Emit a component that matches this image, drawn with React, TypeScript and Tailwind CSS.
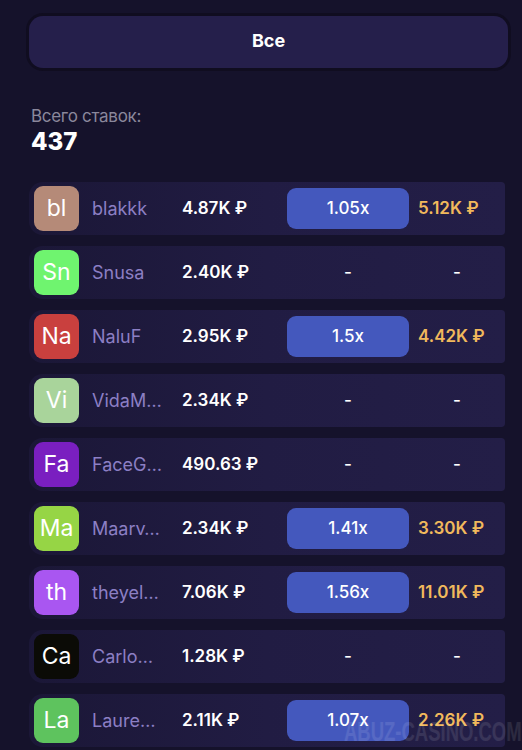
import React from "react";

interface Bet {
  initials: string;
  color: string;
  name: string;
  amount: string;
  coef?: string;
  win?: string;
}

const bets: Bet[] = [
  { initials: "bl", color: "bg-[#b58a78]", name: "blakkk", amount: "4.87K ₽", coef: "1.05x", win: "5.12K ₽" },
  { initials: "Sn", color: "bg-[#6ff46f]", name: "Snusa", amount: "2.40K ₽" },
  { initials: "Na", color: "bg-[#c9403e]", name: "NaluF", amount: "2.95K ₽", coef: "1.5x", win: "4.42K ₽" },
  { initials: "Vi", color: "bg-[#a9d49b]", name: "VidaM…", amount: "2.34K ₽" },
  { initials: "Fa", color: "bg-[#7a1fc0]", name: "FaceG…", amount: "490.63 ₽" },
  { initials: "Ma", color: "bg-[#96d545]", name: "Maarv…", amount: "2.34K ₽", coef: "1.41x", win: "3.30K ₽" },
  { initials: "th", color: "bg-[#a956f1]", name: "theyel…", amount: "7.06K ₽", coef: "1.56x", win: "11.01K ₽" },
  { initials: "Ca", color: "bg-[#0b0b06]", name: "Carlo…", amount: "1.28K ₽" },
  { initials: "La", color: "bg-[#5ec35e]", name: "Laure…", amount: "2.11K ₽", coef: "1.07x", win: "2.26K ₽" },
];

const App = () => {
  return (
    <div
      className="relative w-[522px] h-[750px] overflow-hidden bg-[#15122b] text-white"
      style={{ fontFamily: "Inter, 'Noto Sans', sans-serif" }}
    >
      {/* top filter button */}
      <div className="pt-[13px] pl-[26px] pr-[11px]">
        <div className="rounded-[17px] bg-[#100d20] p-[3px]">
          <button className="w-full h-[52px] pb-[3px] rounded-[14px] bg-[#251f4b] text-[18px] font-bold text-white">
            Все
          </button>
        </div>
      </div>

      {/* total */}
      <div className="pl-[31px] mt-[35px]">
        <div className="text-[17px] leading-[21px] text-[#8a879b] tracking-[-0.3px]">Всего ставок:</div>
        <div className="text-[24px] leading-[28px] font-extrabold mt-[1px]">437</div>
      </div>

      {/* bets list */}
      <div className="mt-[26px] pl-[29px] pr-[17px] flex flex-col gap-[11px]">
        {bets.map((b, idx) => (
          <div
            key={idx}
            className="h-[53px] flex items-center pl-[5px] rounded-l-[14px] rounded-r-[4px] bg-linear-to-r from-[#1b1737] via-[#211c43] to-[#231e47]"
          >
            <div
              className={`w-[45px] h-[45px] shrink-0 rounded-[9px] ${b.color} flex items-center justify-center text-[23px] leading-none text-white`}
            >
              {b.initials}
            </div>
            <div className="w-[103px] pl-[13px] text-[18px] text-[#8c7fc4] whitespace-nowrap">{b.name}</div>
            <div className="w-[105px] text-[17px] font-semibold whitespace-nowrap">{b.amount}</div>
            {b.coef ? (
              <div className="w-[122px] h-[41px] rounded-[9px] bg-[#4458bd] flex items-center justify-center text-[17px] font-medium">
                {b.coef}
              </div>
            ) : (
              <div className="w-[122px] h-[41px] flex items-center justify-center text-[17px] font-medium">-</div>
            )}
            {b.win ? (
              <div className="pl-[9px] text-[17px] font-semibold text-[#f1b95c] whitespace-nowrap">{b.win}</div>
            ) : (
              <div className="w-[96px] text-center text-[17px] font-medium">-</div>
            )}
          </div>
        ))}
      </div>

      {/* watermark */}
      <div
        className="absolute left-[344px] top-[716px] text-[28px] leading-[32px] font-bold text-white/10 whitespace-nowrap pointer-events-none origin-left scale-x-[0.66]"
        style={{ fontFamily: "'Liberation Sans', sans-serif" }}
      >
        ABUZ-CASINO.COM
      </div>
    </div>
  );
};

export default App;
